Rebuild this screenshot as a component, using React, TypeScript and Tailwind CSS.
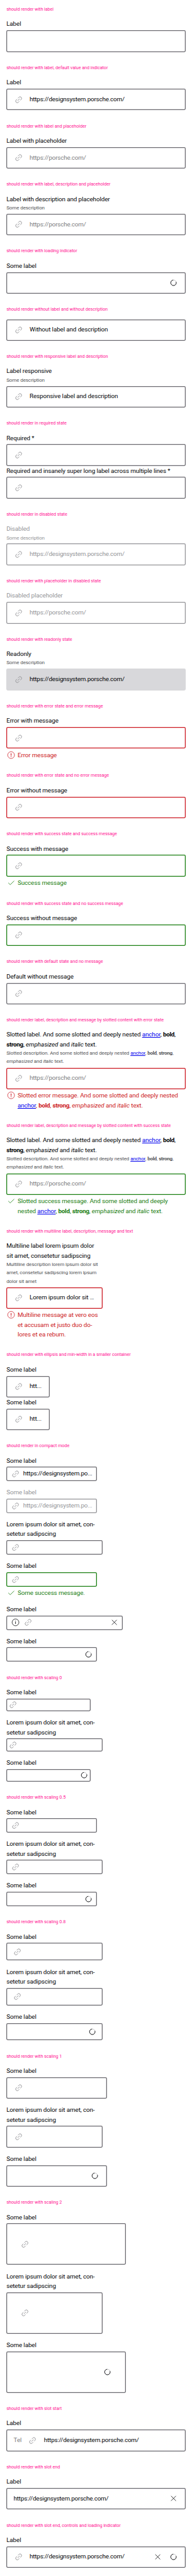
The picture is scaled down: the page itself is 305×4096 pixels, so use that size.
import type { ReactNode } from "react";
import clsx from "clsx";

type State = "none" | "error" | "success" | "disabled" | "readonly";

function LinkIcon() {
  return (
    <svg viewBox="0 0 24 24" className="size-6 shrink-0 text-[#949598]" fill="none" stroke="currentColor" strokeWidth="1.45">
      <g transform="rotate(-45 12 12)">
        <path d="M10.2 15.9H7a3.9 3.9 0 0 1 0-7.8h3.2" />
        <path d="M13.8 8.1H17a3.9 3.9 0 0 1 0 7.8h-3.2" />
        <path d="M8.3 12h7.4" />
      </g>
    </svg>
  );
}

function Spinner() {
  return (
    <svg viewBox="0 0 24 24" className="size-6 shrink-0" fill="none">
      <circle cx="12" cy="12" r="6.9" stroke="#a4a5a8" strokeWidth="1" />
      <path d="M18.6 10a6.9 6.9 0 1 1-7.2-4.9" stroke="#010205" strokeWidth="1.3" />
    </svg>
  );
}

function CloseIcon() {
  return (
    <svg viewBox="0 0 24 24" className="size-6 shrink-0" fill="none" stroke="#010205" strokeWidth="1.2">
      <path d="M5.9 5.9l12.2 12.2M18.1 5.9L5.9 18.1" />
    </svg>
  );
}

function InfoIcon() {
  return (
    <svg viewBox="0 0 24 24" className="size-6 shrink-0" fill="none" stroke="#010205" strokeWidth="1.2">
      <circle cx="12" cy="12" r="8.5" />
      <path d="M12 10.6v5.2M12 8v1.4" strokeWidth="1.4" />
    </svg>
  );
}

function ErrorIcon() {
  return (
    <svg viewBox="0 0 24 24" className="size-6 shrink-0" fill="none" stroke="currentColor" strokeWidth="1.2">
      <circle cx="12" cy="12" r="8.5" />
      <path d="M12 7.4v5.8M12 14.6v1.8" strokeWidth="1.7" />
    </svg>
  );
}

function CheckIcon() {
  return (
    <svg viewBox="0 0 24 24" className="size-6 shrink-0" fill="none" stroke="currentColor" strokeWidth="1.2">
      <path d="M5 12.2l4.8 4.6L19.8 7.3" />
    </svg>
  );
}

function Section({ title, children }: { title: string; children: ReactNode }) {
  return (
    <section className="flex flex-col p-4">
      <h2 className="mb-4 text-[7.25px] leading-4 tracking-[-0.0105em] whitespace-nowrap text-[#ff1493]">{title}</h2>
      {children}
    </section>
  );
}

const ring: Record<State, string> = {
  none: "shadow-[inset_0_0_0_1.27px_#6b6a70]",
  error: "shadow-[inset_0_0_0_1.27px_#cc1922]",
  success: "shadow-[inset_0_0_0_1.27px_#197e10]",
  disabled: "shadow-[inset_0_0_0_1.27px_#949498]",
  readonly: "bg-[#d8d8db]",
};

interface FieldProps {
  label?: ReactNode;
  description?: ReactNode;
  state?: State;
  value?: string;
  placeholder?: string;
  message?: ReactNode;
  link?: boolean;
  loading?: boolean;
  start?: ReactNode;
  end?: ReactNode;
  box?: string;
}

function Field({
  label,
  description,
  state = "none",
  value,
  placeholder,
  message,
  link = true,
  loading,
  start,
  end,
  box = "h-13.5 w-full px-4.5 gap-4",
}: FieldProps) {
  const disabled = state === "disabled";
  return (
    <div className="flex flex-col items-start">
      {label && <div className={clsx("leading-6 whitespace-nowrap", disabled && "text-[#949598]")}>{label}</div>}
      {description && (
        <div
          className={clsx(
            "text-[8px] leading-5.25 tracking-[-0.012em] whitespace-nowrap",
            disabled ? "text-[#949598]" : "text-[#535457]",
          )}
        >
          {description}
        </div>
      )}
      <div
        className={clsx("flex items-center rounded-[2.4px]", (label || description) && "mt-1", ring[state], box)}
      >
        {start}
        {link && <LinkIcon />}
        <span
          className={clsx(
            "min-w-0 flex-1 overflow-hidden whitespace-nowrap",
            (value ?? placeholder)?.startsWith("http") && "tracking-[-0.019em]",
            disabled ? "text-[#949598]" : placeholder ? "text-[#7d7e80]" : "text-[#010205]",
          )}
        >
          {value ?? placeholder}
        </span>
        {end}
        {loading && <Spinner />}
      </div>
      {message && (
        <div
          className={clsx(
            "mt-1 flex gap-1 leading-6 whitespace-nowrap",
            state === "error" ? "text-[#cc1922]" : "text-[#197e10]",
          )}
        >
          {state === "error" ? <ErrorIcon /> : <CheckIcon />}
          <div>{message}</div>
        </div>
      )}
    </div>
  );
}

function Anchor() {
  return (
    <a href="#" className="text-[#0000ee] underline">
      anchor
    </a>
  );
}

function RichTail({ breakAfter }: { breakAfter?: "bold" | "strong" }) {
  return (
    <>
      <Anchor />, <b className="tracking-[-0.031em]">bold</b>,{breakAfter === "bold" ? <br /> : " "}
      <strong className="tracking-[-0.031em]">strong</strong>,{breakAfter === "strong" ? <br /> : " "}
      <em className="tracking-[-0.003em]">emphasized</em> and <i>italic</i> text.
    </>
  );
}

const URL = "https://designsystem.porsche.com/";
const HINT = "https://porsche.com/";

const slottedLabel = (
  <>
    Slotted label. And some slotted and deeply nested <RichTail breakAfter="bold" />
  </>
);

const slottedDescription = (
  <div className="pb-[0.3px]">
    Slotted description. And some slotted and deeply nested <RichTail breakAfter="strong" />
  </div>
);

const loremLabel = (
  <>
    Lorem ipsum dolor sit amet, con-
    <br />
    setetur sadipscing
  </>
);

function Scaling({ title, regular, narrow }: { title: string; regular: string; narrow: string }) {
  return (
    <Section title={title}>
      <div className="flex flex-col gap-4">
        <Field label="Some label" box={regular} />
        <Field label={loremLabel} box={narrow} />
        <Field label="Some label" link={false} loading box={regular} />
      </div>
    </Section>
  );
}

export default function App() {
  return (
    <main className="w-full bg-white font-['Roboto',sans-serif] text-[9.85px] tracking-[-0.011em] text-[#010205] [--spacing:2.5425px]">
      <Section title="should render with label">
        <Field label="Label" link={false} />
      </Section>
      <Section title="should render with label, default value and indicator">
        <Field label="Label" value={URL} />
      </Section>
      <Section title="should render with label and placeholder">
        <Field label="Label with placeholder" placeholder={HINT} />
      </Section>
      <Section title="should render with label, description and placeholder">
        <Field label="Label with description and placeholder" description="Some description" placeholder={HINT} />
      </Section>
      <Section title="should render with loading indicator">
        <Field label="Some label" link={false} loading />
      </Section>
      <Section title="should render without label and without description">
        <Field value="Without label and description" />
      </Section>
      <Section title="should render with responsive label and description">
        <Field label="Label responsive" description="Some description" value="Responsive label and description" />
      </Section>
      <Section title="should render in required state">
        <Field label="Required *" />
        <Field label="Required and insanely super long label across multiple lines *" />
      </Section>
      <Section title="should render in disabled state">
        <Field label="Disabled" description="Some description" value={URL} state="disabled" />
      </Section>
      <Section title="should render with placeholder in disabled state">
        <Field label="Disabled placeholder" placeholder={HINT} state="disabled" />
      </Section>
      <Section title="should render with readonly state">
        <Field label="Readonly" description="Some description" value={URL} state="readonly" />
      </Section>
      <Section title="should render with error state and error message">
        <Field label="Error with message" state="error" message="Error message" />
      </Section>
      <Section title="should render with error state and no error message">
        <Field label="Error without message" state="error" />
      </Section>
      <Section title="should render with success state and success message">
        <Field label="Success with message" state="success" message="Success message" />
      </Section>
      <Section title="should render with success state and no success message">
        <Field label="Success without message" state="success" />
      </Section>
      <Section title="should render with default state and no message">
        <Field label="Default without message" />
      </Section>
      <Section title="should render label, description and message by slotted content with error state">
        <Field
          label={slottedLabel}
          description={slottedDescription}
          placeholder={HINT}
          state="error"
          message={
            <>
              Slotted error message. And some slotted and deeply nested
              <br />
              <RichTail />
            </>
          }
        />
      </Section>
      <Section title="should render label, description and message by slotted content with success state">
        <Field
          label={slottedLabel}
          description={slottedDescription}
          placeholder={HINT}
          state="success"
          message={
            <>
              Slotted success message. And some slotted and deeply
              <br />
              nested <RichTail />
            </>
          }
        />
      </Section>
      <Section title="should render with multiline label, description, message and text">
        <Field
          label={
            <>
              Multiline label lorem ipsum dolor
              <br />
              sit amet, consetetur sadipscing
            </>
          }
          description={
            <>
              Multiline description lorem ipsum dolor sit
              <br />
              amet, consetetur sadipscing lorem ipsum
              <br />
              dolor sit amet
            </>
          }
          value="Lorem ipsum dolor sit …"
          state="error"
          box="h-13.5 w-60 px-4.5 gap-4"
          message={
            <>
              Multiline message at vero eos
              <br />
              et accusam et justo duo do-
              <br />
              lores et ea rebum.
            </>
          }
        />
      </Section>
      <Section title="should render with ellipsis and min-width in a smaller container">
        <Field label="Some label" value="htt..." box="h-13.5 w-27 px-4.5 gap-4" />
        <Field label="Some label" value="htt..." box="h-13.5 w-27 px-4.5 gap-4" />
      </Section>
      <Section title="should render in compact mode">
        <div className="flex flex-col gap-4">
          <Field label="Some label" value="https://designsystem.po..." box="h-9 w-56.75 px-2.5 gap-2" />
          <Field
            label="Some label"
            value="https://designsystem.po..."
            state="disabled"
            box="h-9 w-56.75 px-2.5 gap-2"
          />
          <Field label={loremLabel} box="h-9 w-60 px-2.5 gap-2" />
          <Field label="Some label" state="success" message="Some success message." box="h-9 w-56.75 px-2.5 gap-2" />
          <Field label="Some label" start={<InfoIcon />} end={<CloseIcon />} box="h-9 w-72.75 px-2.5 gap-2" />
          <Field label="Some label" link={false} loading box="h-9 w-56.75 px-2.5 gap-2" />
        </div>
      </Section>
      <Scaling
        title="should render with scaling 0"
        regular="h-8 w-52.75 px-1 gap-1"
        narrow="h-8 w-60 px-1 gap-1"
      />
      <Scaling
        title="should render with scaling 0.5"
        regular="h-9 w-56.75 px-2.5 gap-2"
        narrow="h-9 w-60 px-2.5 gap-2"
      />
      <Scaling
        title="should render with scaling 0.8"
        regular="h-11 w-60.25 px-3.75 gap-3"
        narrow="h-11 w-60 px-3.75 gap-3"
      />
      <Scaling
        title="should render with scaling 1"
        regular="h-13.5 w-62.75 px-4.5 gap-4"
        narrow="h-13.5 w-60 px-4.5 gap-4"
      />
      <Scaling
        title="should render with scaling 2"
        regular="h-26 w-74.75 px-8.5 gap-8"
        narrow="h-26 w-60 px-8.5 gap-8"
      />
      <Section title="should render with slot start">
        <Field label="Label" value={URL} start={<span className="text-[#7d7e80]">Tel</span>} />
      </Section>
      <Section title="should render with slot end">
        <Field label="Label" value={URL} link={false} end={<CloseIcon />} />
      </Section>
      <Section title="should render with slot end, controls and loading indicator">
        <Field label="Label" value={URL} end={<CloseIcon />} loading />
      </Section>
    </main>
  );
}
